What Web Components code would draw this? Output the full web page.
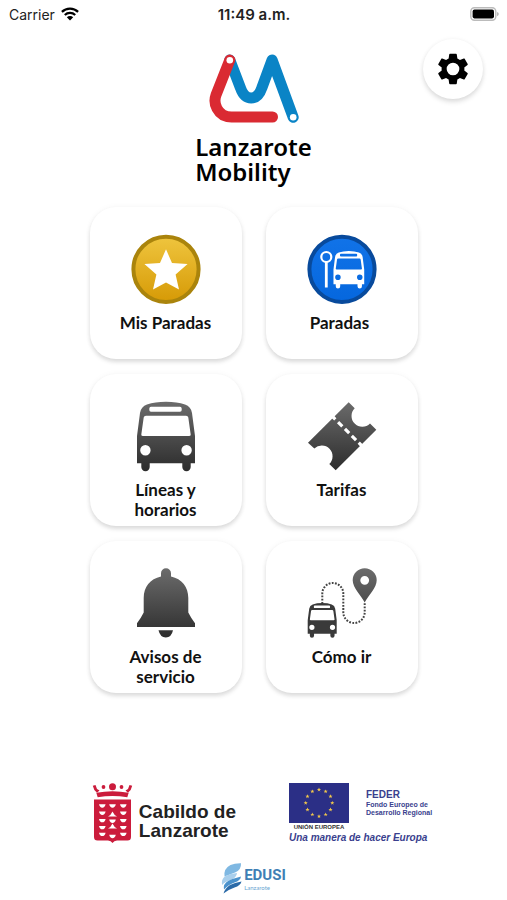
<!DOCTYPE html>
<html lang="es">
<head>
<meta charset="utf-8">
<meta name="viewport" content="width=device-width, initial-scale=1">
<title>Lanzarote Mobility</title>
<style>
  html, body { margin: 0; background: #fff; }
  body { font-family: Lato, "Open Sans", sans-serif; color: #111; }
</style>
</head>
<body>
<mobility-app></mobility-app>

<script>
const define = (name, html) => {
  const template = document.createElement('template');
  template.innerHTML = html;
  customElements.define(name, class extends HTMLElement {
    constructor() {
      super();
      this.attachShadow({ mode: 'open' }).append(template.content.cloneNode(true));
    }
  });
};

const BUS = `<path fill-rule="evenodd" d="M6 62.3V35L9 12Q10 5.5 16 3.5Q24 .7 35 .7T54 3.5Q60 5.5 61 12L64 35V62.3H59.7V66A4 4 0 0 1 51.3 66V62.3H18.7V66A4 4 0 0 1 10.3 66V62.3Z
  M20 5.7A2 2 0 0 0 18.3 7.5V9A1.7 1.7 0 0 0 20 10.7H49A1.7 1.7 0 0 0 50.7 9V7.5A2 2 0 0 0 49 5.7Z
  M15 14.7Q13 14.7 12.7 16.5L10.3 33.5Q10.2 35 12 35H58Q59.8 35 59.7 33.5L57.3 16.5Q57 14.7 55 14.7Z
  M19.6 49.3A5.2 5.2 0 1 0 9.2 49.3A5.2 5.2 0 1 0 19.6 49.3Z
  M60.8 49.3A5.2 5.2 0 1 0 50.4 49.3A5.2 5.2 0 1 0 60.8 49.3Z"/>`;

const GREY = `<defs><linearGradient id="g" gradientUnits="userSpaceOnUse" x1="0" y1="0" x2="0" y2="70"><stop offset="0" stop-color="#6c6c6c"/><stop offset="1" stop-color="#2c2c2c"/></linearGradient></defs>`;

const ICONS = {
  star: `<defs><linearGradient id="g" x1="0" y1="0" x2="0" y2="1"><stop offset="0" stop-color="#efc53e"/><stop offset="1" stop-color="#d69a06"/></linearGradient></defs>
    <circle cx="35" cy="35.3" r="32.6" fill="url(#g)" stroke="#aa840c" stroke-width="4"/>
    <path fill="#fff" d="M35 15.3L41 29L56.6 30L44.6 40.5L48 55.6L35 48.6L22 55.6L25.4 40.5L13.4 30L29 29Z"/>`,
  stop: `<defs><linearGradient id="g" x1="0" y1="0" x2="0" y2="1"><stop offset="0" stop-color="#1173e8"/><stop offset="1" stop-color="#0567de"/></linearGradient></defs>
    <circle cx="35" cy="35.3" r="32.6" fill="url(#g)" stroke="#084a9c" stroke-width="4"/>
    <circle cx="19.3" cy="23" r="5" fill="none" stroke="#fff" stroke-width="2.2"/>
    <path d="M19.3 28V53.5" stroke="#fff" stroke-width="2.8"/>
    <g fill="#fff" transform="translate(23.300 16.600) scale(.53 .54)">${BUS}</g>`,
  bus: `${GREY}<g fill="url(#g)">${BUS}</g>`,
  ticket: `${GREY}<path fill="url(#g)" d="M41.7 1.3L47.7 7.3A10.3 10.3 0 0 0 63 22.6L69.3 28.7L28.7 69.3L22.3 63A10.3 10.3 0 0 0 7.3 47.6L1 41.7Z"/>
    <path d="M25.5 15.5L55 45" fill="none" stroke="#fff" stroke-width="3.2" stroke-dasharray="4 3.9 6 3.7 6 3.7 6 3.8 8"/>`,
  bell: `${GREY}<g fill="url(#g)"><path d="M30 5.300A5 5 0 0 1 40 5.300V8.600C51 11 57.300 19 57.300 30V44.500Q60 50 64 55.300V59H6V55.300Q10 50 12.700 44.500V30C12.700 19 19 11 30 8.600ZM27.500 62.300H42Q40.500 69.500 34.800 69.500T27.500 62.300Z"/></g>`,
  route: `${GREY}<g fill="url(#g)"><path fill-rule="evenodd" d="M57.7 34.5C54 27 45.7 20 45.7 12.3A12 12 0 0 1 69.7 12.3C69.7 20 61.5 27 57.7 34.5ZM62.1 12.3A4.4 4.4 0 1 0 53.3 12.3A4.4 4.4 0 1 0 62.1 12.3Z"/></g>
    <path fill="none" stroke="#444" stroke-width="2" stroke-dasharray="1.8 1.4" d="M57.7 35.3V44.3A10.7 10.7 0 0 1 36.3 44.3V25.5A10.5 10.5 0 0 0 15.3 25.5V35"/>
    <g fill="#3a3a3a" transform="translate(-2.3 34.7) scale(.5)">${BUS}</g>`
};

customElements.define('menu-icon', class extends HTMLElement {
  constructor() {
    super();
    this.attachShadow({ mode: 'open' });
  }
  connectedCallback() {
    this.shadowRoot.innerHTML = `<style>:host{display:block;width:70px;height:70px}svg{display:block;overflow:visible}</style>
      <svg width="70" height="70" viewBox="0 0 70 70" aria-hidden="true">${ICONS[this.getAttribute('name')]}</svg>`;
  }
});

define('menu-card', `
  <style>
    :host { display: flex; }
    a {
      flex: 1; box-sizing: border-box; min-height: 152px; padding: 27px 16px 4px;
      display: flex; flex-direction: column; align-items: center; gap: 9px;
      border-radius: 26px; background: #fff; color: #111; text-decoration: none;
      box-shadow: 0 3px 4px rgba(0,0,0,.13), 0 0 6px rgba(0,0,0,.04);
    }
    span { font-size: 17px; font-weight: 700; line-height: 20px; text-align: center; }
  </style>
  <a href="#"><slot name="icon"></slot><span><slot></slot></span></a>`);

define('menu-grid', `
  <style>
    :host { display: grid; grid-template-columns: repeat(2, minmax(0, 152px)); gap: 15px 24px; justify-content: center; padding: 0 24px; }
  </style>
  <slot></slot>`);

define('status-bar', `
  <style>
    :host { display: grid; grid-template-columns: 1fr auto 1fr; align-items: center; height: 28px; padding: 0 8px 0 9px; font-family: Inter, sans-serif; font-size: 14px; color: #222; }
    .net { display: flex; align-items: center; gap: 6px; }
    .time { font-size: 15px; font-weight: 600; }
    svg { display: block; }
    .bat { justify-self: end; }
  </style>
  <div class="net"><span>Carrier</span>
    <svg width="18" height="14" viewBox="0 0 18 14" aria-label="Wi-Fi"><g fill="none" stroke="#000" stroke-width="2.2"><path d="M.9 4.9a11.5 11.5 0 0 1 16.2 0"/><path d="M3.8 8a7.4 7.4 0 0 1 10.4 0"/></g><path d="M9 13.6L5.8 10.3a4.5 4.5 0 0 1 6.4 0Z"/></svg>
  </div>
  <span class="time">11:49 a.m.</span>
  <svg class="bat" width="29" height="14" viewBox="0 0 29 14" aria-label="Batería"><rect x=".8" y=".8" width="25" height="12.4" rx="3.6" fill="#fff" stroke="#bbb" stroke-width="1.4"/><rect x="2.6" y="2.6" width="21.4" height="8.8" rx="1.8"/><path d="M27.2 5v4.200q1.500-.6 1.500-2.100t-1.500-2.100Z" fill="#aaa"/></svg>`);

define('brand-logo', `
  <style>
    :host { display: flex; flex-direction: column; align-items: center; padding-top: 24px; }
    svg { display: block; }
    h1 { margin: 10px 0 0; font-family: "Noto Sans", sans-serif; font-size: 24px; line-height: 25px; font-weight: 600; color: #000; }
  </style>
  <svg width="120" height="72" viewBox="193.500 52 120 72" aria-hidden="true">
    <g fill="none" stroke-width="11" stroke-linecap="round" stroke-linejoin="round">
      <path stroke="#0a84c6" d="M229.300 60L240 88Q243.500 98 250.700 98T261.300 88L271.600 60L292.700 117.300"/>
      <path stroke="#da2a32" d="M229.300 60L215.500 95Q213 102 216.500 108.500Q221 117 231 117H272"/>
    </g>
    <circle cx="229.300" cy="60.300" r="3.300" fill="#fff"/><circle cx="292.700" cy="117.300" r="3.300" fill="#fff"/>
  </svg>
  <h1>Lanzarote<br>Mobility</h1>`);

define('settings-button', `
  <style>
    :host { display: block; }
    button { display: grid; place-items: center; width: 60px; height: 60px; padding: 0; border: 0; border-radius: 50%; background: #fff; box-shadow: 0 3px 5px rgba(0,0,0,.13), 0 0 5px rgba(0,0,0,.04); }
    svg { display: block; }
  </style>
  <button type="button" aria-label="Ajustes"><svg width="38" height="38" viewBox="0 0 24 24"><path d="M19.140 12.940c.04-.3.06-.61.06-.94 0-.32-.02-.64-.07-.94l2.030-1.580c.18-.14.23-.41.12-.61l-1.920-3.320c-.12-.22-.37-.29-.59-.22l-2.390.96c-.5-.38-1.030-.7-1.620-.94l-.36-2.540c-.04-.24-.24-.41-.48-.41h-3.840c-.24 0-.43.17-.47.41l-.36 2.540c-.59.24-1.130.57-1.620.94l-2.390-.96c-.22-.08-.47 0-.59.22L2.740 8.870c-.12.21-.08.47.12.61l2.030 1.580c-.05.3-.09.63-.09.94s.02.64.07.94l-2.030 1.580c-.18.14-.23.41-.12.61l1.920 3.320c.12.22.37.29.59.22l2.390-.96c.5.38 1.030.7 1.620.94l.36 2.540c.05.24.24.41.48.41h3.840c.24 0 .44-.17.47-.41l.36-2.540c.59-.24 1.130-.56 1.620-.94l2.390.96c.22.08.47 0 .59-.22l1.920-3.320c.12-.22.07-.47-.12-.61ZM12 8a4 4 0 1 1 0 8a4 4 0 1 1 0-8Z" fill-rule="evenodd"/></svg></button>`);

define('cabildo-logo', `
  <style>
    :host { display: flex; gap: 5px; align-items: flex-start; }
    svg { display: block; }
    p { margin: 19px 0 0; font: 700 19px/19px "Liberation Sans", Arial, sans-serif; color: #222; }
  </style>
  <svg width="42" height="61" viewBox="0 0 42 61" aria-hidden="true">
    <g fill="#cb1c3c">
      <circle cx="20.500" cy="3.800" r="3.500"/><circle cx="11.500" cy="4" r="1.900"/><circle cx="29.500" cy="4" r="1.900"/>
      <path d="M.8 2.800L3.500 2L5 6L7.500 7.500L5 9.800Q1.500 7 .8 2.800ZM40.200 2.800L37.500 2L36 6L33.500 7.500L36 9.800Q39.500 7 40.200 2.800Z"/>
      <path d="M4.300 9.800Q20.500 6.500 36.700 9.800L35.300 14.300Q20.500 11.600 5.700 14.300Z"/>
      <path d="M2 16.500H39V54Q39 57.500 35.500 57.500H25Q22 57.500 20.500 60Q19 57.500 16 57.500H5.500Q2 57.500 2 54Z"/>
    </g>
    <g fill="#fff">
      <path id="a" d="M7 21.300h6.600q-.8 3.400-3.300 3.400t-3.300-3.400Z"/>
      <use href="#a" y="7.300"/><use href="#a" y="14.600"/><use href="#a" y="21.600"/><use href="#a" y="28.400"/>
      <use href="#a" x="21"/><use href="#a" x="21" y="7.300"/><use href="#a" x="21" y="14.600"/><use href="#a" x="21" y="21.600"/><use href="#a" x="21" y="28.400"/>
      <use href="#a" x="10.200"/><use href="#a" x="10.200" y="15.200"/><use href="#a" x="10.200" y="30.500"/>
      <path d="M16 33.500Q19 32 20.500 28.500Q22 32 25 33.500ZM16 45.500Q19 44 20.500 40.500Q22 44 25 45.500Z"/>
    </g>
  </svg>
  <p>Cabildo de<br>Lanzarote</p>`);

const STAR = (x, y) => `<path transform="translate(${x} ${y}) scale(2.1)" d="M0-1L.3-.3L1-.3L.4.15L.62.85L0 .4L-.62.85L-.4.15L-1-.3L-.3-.3Z"/>`;
const STARS = Array.from({ length: 12 }, (_, i) => {
  const t = i * Math.PI / 6;
  return STAR((30 + 13.3 * Math.sin(t)).toFixed(2), (20 - 13.3 * Math.cos(t)).toFixed(2));
}).join('');

define('feder-logo', `
  <style>
    :host { display: block; font-family: "Liberation Sans", Arial, sans-serif; font-weight: 700; color: #3a3f8e; }
    .top { display: flex; gap: 17px; }
    svg { display: block; }
    figure { margin: 0; width: 60px; }
    figcaption { font-size: 6px; line-height: 8px; font-weight: 700; color: #333; text-align: center; white-space: nowrap; }
    .name { padding-top: 6px; white-space: nowrap; font-size: 7px; line-height: 8px; }
    strong { display: block; font-size: 10px; line-height: 12px; }
    p { margin: 0; font-size: 10px; line-height: 13px; font-style: italic; white-space: nowrap; }
  </style>
  <div class="top">
    <figure><svg width="60" height="40" viewBox="0 0 60 40" aria-hidden="true"><rect width="60" height="40" fill="#2b2f86"/><g fill="#f2c84b">${STARS}</g></svg>
      <figcaption>UNIÓN EUROPEA</figcaption></figure>
    <div class="name"><strong>FEDER</strong>Fondo Europeo de<br>Desarrollo Regional</div>
  </div>
  <p>Una manera de hacer Europa</p>`);

define('edusi-logo', `
  <style>
    :host { display: flex; gap: 2px; justify-content: center; }
    svg { display: block; }
    div { padding-top: 3px; color: #3f7fb5; font: 700 15px/18px Roboto, sans-serif; }
    small { display: block; font: 400 6px/8px Lato, sans-serif; color: #6aa5d2; }
  </style>
  <svg width="21" height="31" viewBox="0 0 21 31" aria-hidden="true">
    <path fill="#7fb8e2" d="M20 .3Q20.500 7 14 9.500T3.500 13.500Q2.500 5.500 9.500 2Q13.500 .2 20 .3Z"/>
    <path fill="#a9cfec" d="M16 10Q15.500 15 9.500 17T1.200 22Q-.3 16 5 12.800Q9 10.800 16 10Z"/>
    <path fill="#4b92cc" d="M20 13.500Q19.500 17.500 13.500 19.500T3 26.500Q1.800 21 7.500 17.800Q12 15.500 20 13.500Z"/>
    <path fill="#2c6ba8" d="M20.500 18.500Q19.500 22.500 13.500 24.500T2.500 30.500Q4 25 9 22Q13.500 19.800 20.500 18.500Z"/>
  </svg>
  <div>EDUSI<small>Lanzarote</small></div>`);

define('mobility-app', `
  <style>
    :host { display: flex; flex-direction: column; min-height: 100vh; }
    header { display: grid; grid-template-columns: 1fr auto 1fr; align-items: start; padding: 0 24px; }
    brand-logo { grid-column: 2; }
    settings-button { justify-self: end; padding-top: 11px; }
    main { padding-top: 23px; }
    footer { margin-top: auto; padding-bottom: 6px; }
    .row { display: flex; justify-content: center; gap: 53px; padding-left: 17px; margin-bottom: 19px; }
  </style>
  <status-bar></status-bar>
  <header><brand-logo></brand-logo><settings-button></settings-button></header>
  <main>
    <menu-grid>
      <menu-card><menu-icon slot="icon" name="star"></menu-icon>Mis Paradas</menu-card>
      <menu-card><menu-icon slot="icon" name="stop"></menu-icon>Paradas&nbsp;</menu-card>
      <menu-card><menu-icon slot="icon" name="bus"></menu-icon>Líneas y horarios</menu-card>
      <menu-card><menu-icon slot="icon" name="ticket"></menu-icon>Tarifas</menu-card>
      <menu-card><menu-icon slot="icon" name="bell"></menu-icon>Avisos de servicio</menu-card>
      <menu-card><menu-icon slot="icon" name="route"></menu-icon>Cómo ir</menu-card>
    </menu-grid>
  </main>
  <footer>
    <div class="row"><cabildo-logo></cabildo-logo><feder-logo></feder-logo></div>
    <edusi-logo></edusi-logo>
  </footer>`);
</script>
</body>
</html>
